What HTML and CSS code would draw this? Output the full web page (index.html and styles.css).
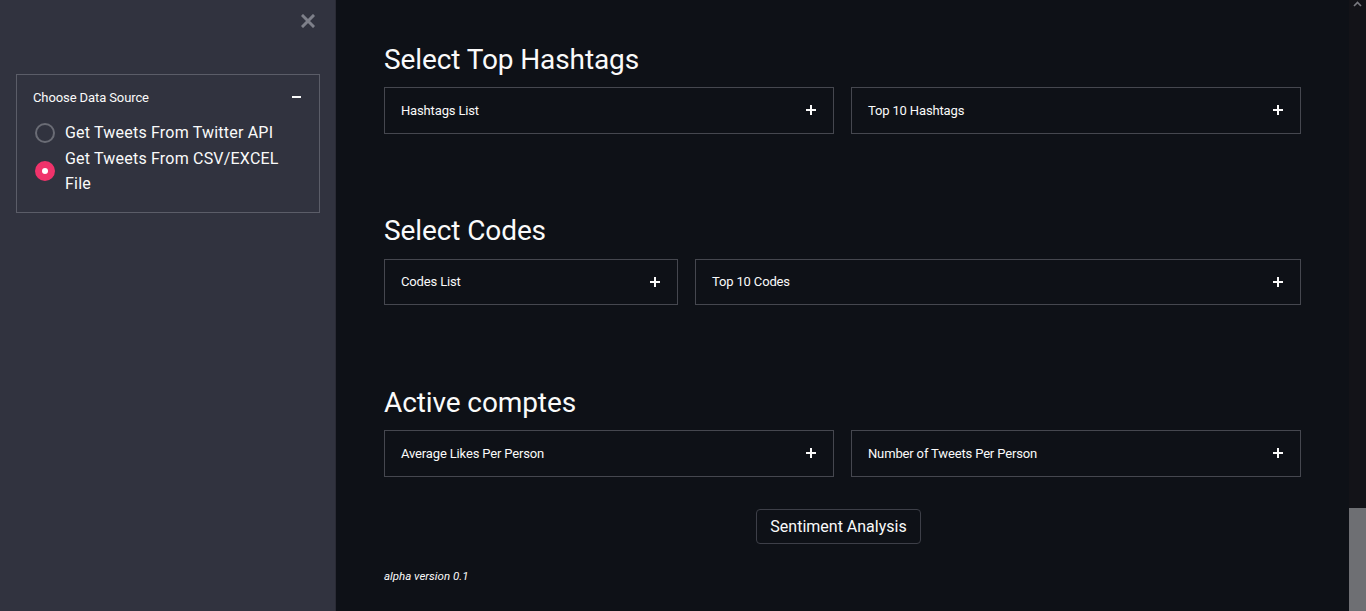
FILE: index.html
```html
<!DOCTYPE html>
<html>
<head>
<meta charset="utf-8">
<link rel="stylesheet" href="styles.css">
</head>
<body>
<div class="app">
  <aside class="sidebar">
    <div class="close-row">
      <svg class="close-icon" width="14" height="14" viewBox="0 0 14 14"><path d="M2 2 L12 12 M12 2 L2 12" stroke="#7e808a" stroke-width="3" stroke-linecap="square"/></svg>
    </div>
    <div class="sb-expander">
      <div class="sb-exp-header">
        <span>Choose Data Source</span>
        <span class="minus"></span>
      </div>
      <div class="radio-group">
        <div class="radio-item">
          <span class="radio"></span>
          <span class="radio-label">Get Tweets From Twitter API</span>
        </div>
        <div class="radio-item">
          <span class="radio checked"><span class="dot"></span></span>
          <span class="radio-label">Get Tweets From CSV/EXCEL<br>File</span>
        </div>
      </div>
    </div>
  </aside>
  <main class="main">
    <div class="content">
      <h2 class="heading">Select Top Hashtags</h2>
      <div class="row">
        <div class="expander"><span>Hashtags List</span><span class="plus"></span></div>
        <div class="expander"><span>Top 10 Hashtags</span><span class="plus"></span></div>
      </div>

      <h2 class="heading">Select Codes</h2>
      <div class="row row-12">
        <div class="expander"><span>Codes List</span><span class="plus"></span></div>
        <div class="expander"><span>Top 10 Codes</span><span class="plus"></span></div>
      </div>

      <h2 class="heading">Active comptes</h2>
      <div class="row">
        <div class="expander"><span>Average Likes Per Person</span><span class="plus"></span></div>
        <div class="expander"><span>Number of Tweets Per Person</span><span class="plus"></span></div>
      </div>

      <div class="btn-row">
        <button class="btn">Sentiment Analysis</button>
      </div>
      <p class="footer">alpha version 0.1</p>
    </div>
  </main>
  <div class="scrollbar">
    <svg class="arrow" width="9" height="6" viewBox="0 0 9 6"><path d="M1 5 L4.5 1.5 L8 5" stroke="#7a7a80" stroke-width="1.6" fill="none"/></svg>
    <div class="thumb"></div>
  </div>
</div>
</body>
</html>
```

FILE: styles.css
```css
* { box-sizing: border-box; }
html, body {
  margin: 0;
  padding: 0;
  height: 611px;
  overflow: hidden;
  background: #0e1117;
  font-family: Roboto, "Noto Sans", sans-serif;
  color: #fafafa;
}
.app {
  display: flex;
  height: 611px;
}
.sidebar {
  width: 336px;
  flex: none;
  background: #31333f;
  padding: 13px 16px 0 16px;
  box-shadow: inset -1px 0 0 #2a2b35;
}
.close-row {
  display: flex;
  justify-content: flex-end;
  padding-right: 5px;
  height: 16px;
}
.close-icon { display: block; margin-top: 1px; }
.sb-expander {
  margin-top: 45px;
  border: 1px solid #5b5d68;
  padding: 0 16px 15px 16px;
}
.sb-exp-header {
  display: flex;
  justify-content: space-between;
  align-items: center;
  height: 44px;
  font-size: 13px;
  letter-spacing: -0.1px;
}
.minus {
  display: block;
  width: 9px;
  height: 2px;
  background: #fafafa;
  margin-right: 2px;
}
.radio-group {
  display: flex;
  flex-direction: column;
  gap: 0;
  margin-top: 1px;
}
.radio-item {
  display: flex;
  align-items: center;
  gap: 10px;
}
.radio {
  width: 20px;
  height: 20px;
  border-radius: 50%;
  border: 2px solid #6a6c75;
  flex: none;
  margin-left: 2px;
  display: flex;
  align-items: center;
  justify-content: center;
}
.radio.checked {
  background: #f0336b;
  border-color: #f0336b;
}
.dot {
  width: 6px;
  height: 6px;
  border-radius: 50%;
  background: #fff;
}
.radio-label {
  font-size: 16px;
  line-height: 25.5px;
  letter-spacing: 0.2px;
}
.main {
  flex: 1;
  padding: 42.5px 48px 0 48px;
}
.content {
  width: 917px;
}
.heading {
  margin: 0;
  font-weight: 400;
  font-size: 28px;
  line-height: 34px;
  letter-spacing: -0.1px;
}
.row {
  display: grid;
  grid-template-columns: 1fr 1fr;
  gap: 17px;
  margin-top: 10.5px;
  margin-bottom: 80.5px;
}
.row-12 {
  grid-template-columns: 294px 1fr;
}
.expander {
  height: 46.5px;
  border: 1px solid #45474f;
  display: flex;
  align-items: center;
  justify-content: space-between;
  padding: 0 17px 0 16px;
  font-size: 13px;
  letter-spacing: -0.15px;
}
.plus {
  position: relative;
  width: 10px;
  height: 10px;
}
.plus::before, .plus::after {
  content: "";
  position: absolute;
  background: #fafafa;
}
.plus::before { left: 4px; top: 0; width: 2px; height: 10px; }
.plus::after { left: 0; top: 4px; width: 10px; height: 2px; }
.btn-row {
  display: flex;
  justify-content: center;
  margin-top: -48px;
  padding-right: 8px;
}
.btn {
  font-family: inherit;
  font-size: 16px;
  color: #fafafa;
  background: #0e1117;
  border: 1px solid #3d3f48;
  border-radius: 4px;
  height: 35px;
  padding: 0 13px;
}
.footer {
  margin: 25px 0 0 0;
  font-size: 11.5px;
  font-style: italic;
  color: #fafafa;
}
.scrollbar {
  width: 17px;
  flex: none;
  background: #131318;
  display: flex;
  flex-direction: column;
  justify-content: space-between;
  align-items: center;
}
.arrow { display: block; margin-top: 1px; }
.thumb {
  width: 17px;
  height: 103px;
  background: #6e6f73;
}
```
